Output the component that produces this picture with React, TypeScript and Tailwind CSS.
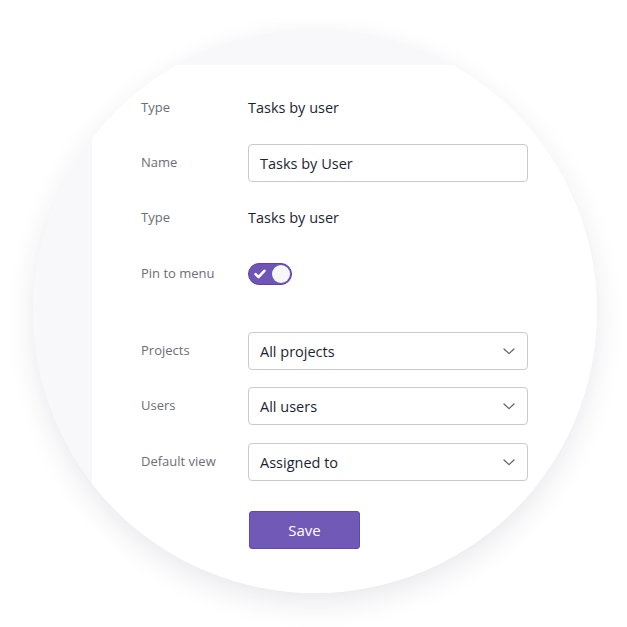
import React from "react";

const font = { fontFamily: '"Open Sans", "Noto Sans", sans-serif' };

function Label({ children }: { children: React.ReactNode }) {
  return <div className="w-[107px] shrink-0 text-[13px] text-[#6b6e75]">{children}</div>;
}

function Chevron() {
  return (
    <svg width="12" height="7" viewBox="0 0 12 7" fill="none" className="mr-[1px] shrink-0">
      <path d="M1 1l5 4.6L11 1" stroke="#5b5f68" strokeWidth="1.2" strokeLinecap="round" strokeLinejoin="round" />
    </svg>
  );
}

function Select({ value }: { value: string }) {
  return (
    <div className="flex h-[38px] w-[280px] items-center justify-between rounded-[4px] border border-[#c9c9ce] bg-white pl-[11px] pr-[11px] pt-[1px] text-[14.5px] text-[#1b1f33]">
      <span>{value}</span>
      <Chevron />
    </div>
  );
}

function Toggle() {
  return (
    <div className="flex h-[22px] w-[44px] items-center justify-between rounded-full border border-[#5d44a6] bg-[#6f55b6] pl-[5px] pr-[1px]">
      <svg width="12" height="10" viewBox="0 0 12 10" fill="none">
        <path d="M1.6 5.2l2.9 2.9 5.9-6.3" stroke="white" strokeWidth="2.6" strokeLinecap="round" strokeLinejoin="round" />
      </svg>
      <div className="h-[18px] w-[18px] rounded-full bg-[#f7f7fa]" />
    </div>
  );
}

export default function App() {
  return (
    <div className="h-[627px] w-[627px] overflow-hidden bg-white pl-[33px] pt-[29px]" style={font}>
      <div className="h-[564px] w-[564px] overflow-hidden rounded-full bg-[#f8f8fa] shadow-[0_10px_28px_rgba(40,40,80,0.10)]">
        <div className="ml-[59px] mt-[36px] h-[600px] w-[600px] bg-white pl-[49px] pt-[24px]">
          <div className="flex h-[38px] items-center">
            <Label>Type</Label>
            <span className="text-[14.5px] text-[#1b1f33]">Tasks by user</span>
          </div>
          <div className="mt-[17px] flex h-[38px] items-center">
            <Label>Name</Label>
            <div className="flex h-[38px] w-[280px] items-center rounded-[4px] border border-[#c9c9ce] bg-white pl-[11px] pt-[1px] text-[14.5px] text-[#1b1f33]">
              Tasks by User
            </div>
          </div>
          <div className="mt-[17px] flex h-[38px] items-center">
            <Label>Type</Label>
            <span className="text-[14.5px] text-[#1b1f33]">Tasks by user</span>
          </div>
          <div className="mt-[18px] flex h-[38px] items-center">
            <Label>Pin to menu</Label>
            <Toggle />
          </div>
          <div className="mt-[39px] flex h-[38px] items-center">
            <Label>Projects</Label>
            <Select value="All projects" />
          </div>
          <div className="mt-[17px] flex h-[38px] items-center">
            <Label>Users</Label>
            <Select value="All users" />
          </div>
          <div className="mt-[18px] flex h-[38px] items-center">
            <Label>Default view</Label>
            <Select value="Assigned to" />
          </div>
          <div className="mt-[30px] pl-[108px]">
            <button className="h-[38px] w-[111px] rounded-[3px] border border-[#6349ae] bg-[#7159b7] pt-[1px] text-[15px] font-medium text-white">
              Save
            </button>
          </div>
        </div>
      </div>
    </div>
  );
}
